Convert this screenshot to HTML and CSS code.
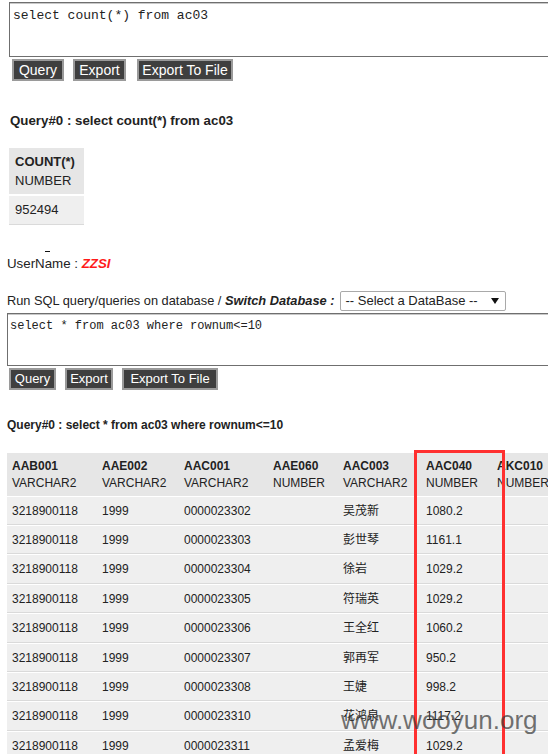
FILE: index.html
```html
<!DOCTYPE html>
<html>
<head>
<meta charset="utf-8">
<link rel="stylesheet" href="styles.css">
</head>
<body>
<section class="top">
  <textarea class="sql sql-top">select count(*) from ac03</textarea>
  <div class="btns btns-top">
    <button class="btn b-q">Query</button>
    <button class="btn b-e">Export</button>
    <button class="btn b-f">Export To File</button>
  </div>
  <h4 class="qtitle qtitle-top">Query#0 : select count(*) from ac03</h4>
  <table class="res res-top">
    <tr><th class="cnt"><b>COUNT(*)</b><br>NUMBER</th></tr>
    <tr><td>952494</td></tr>
  </table>
</section>

<span class="dash"></span>
<p class="user">UserName : <b class="zzsi">ZZSI</b></p>

<div class="runrow">
  <span>Run SQL query/queries on database / <b><i>Switch Database :</i></b></span>
  <div class="select">
    <span>-- Select a DataBase --</span>
    <svg class="arrow" width="8" height="6" viewBox="0 0 8 6"><polygon points="0,0 8,0 4,6" fill="#111"/></svg>
  </div>
</div>
<textarea class="sql sql-bot">select * from ac03 where rownum&lt;=10</textarea>
<div class="btns btns-bot">
  <button class="btn b-q">Query</button>
  <button class="btn b-e">Export</button>
  <button class="btn b-f">Export To File</button>
</div>
<h4 class="qtitle qtitle-bot">Query#0 : select * from ac03 where rownum&lt;=10</h4>

<div class="tablewrap">
  <table class="res res-main">
    <tr>
      <th class="c1"><b>AAB001</b><br>VARCHAR2</th>
      <th class="c2"><b>AAE002</b><br>VARCHAR2</th>
      <th class="c3"><b>AAC001</b><br>VARCHAR2</th>
      <th class="c4"><b>AAE060</b><br>NUMBER</th>
      <th class="c5"><b>AAC003</b><br>VARCHAR2</th>
      <th class="c6"><b>AAC040</b><br>NUMBER</th>
      <th class="c7"><b>AKC010</b><br>NUMBER</th>
      <th class="c8"><b>AKC011</b><br>NUMBER</th>
    </tr>
    <tr><td>3218900118</td><td>1999</td><td>0000023302</td><td></td><td>吴茂新</td><td>1080.2</td><td></td><td></td></tr>
    <tr><td>3218900118</td><td>1999</td><td>0000023303</td><td></td><td>彭世琴</td><td>1161.1</td><td></td><td></td></tr>
    <tr><td>3218900118</td><td>1999</td><td>0000023304</td><td></td><td>徐岩</td><td>1029.2</td><td></td><td></td></tr>
    <tr><td>3218900118</td><td>1999</td><td>0000023305</td><td></td><td>符瑞英</td><td>1029.2</td><td></td><td></td></tr>
    <tr><td>3218900118</td><td>1999</td><td>0000023306</td><td></td><td>王全红</td><td>1060.2</td><td></td><td></td></tr>
    <tr><td>3218900118</td><td>1999</td><td>0000023307</td><td></td><td>郭再军</td><td>950.2</td><td></td><td></td></tr>
    <tr><td>3218900118</td><td>1999</td><td>0000023308</td><td></td><td>王婕</td><td>998.2</td><td></td><td></td></tr>
    <tr><td>3218900118</td><td>1999</td><td>0000023310</td><td></td><td>花鸿泉</td><td>1117.2</td><td></td><td></td></tr>
    <tr><td>3218900118</td><td>1999</td><td>0000023311</td><td></td><td>孟爱梅</td><td>1029.2</td><td></td><td></td></tr>
    <tr><td>3218900118</td><td>1999</td><td>0000023312</td><td></td><td>张军</td><td>1029.2</td><td></td><td></td></tr>
  </table>
  <div class="redbox"></div>
  <div class="watermark">www.wooyun.org</div>
</div>
</body>
</html>
```

FILE: styles.css
```css
html, body {
  margin: 0;
  padding: 0;
  overflow: hidden;
  background: #fff;
}
body {
  font-family: "Liberation Sans", Arial, "Noto Sans CJK SC", sans-serif;
  font-size: 12px;
  color: #222;
}

.sql {
  display: block;
  box-sizing: border-box;
  resize: none;
  width: 620px;
  border: 1px solid #6f6f6f;
  box-shadow: inset 0 1px 0 #c8c8c8;
  font-family: "Liberation Mono", "Courier New", monospace;
  color: #222;
  background: #fff;
  outline: none;
  overflow: hidden;
}
.sql-top {
  margin: 2px 0 0 9px;
  height: 55px;
  padding: 5px 3px;
  font-size: 13px;
  line-height: 15px;
}
.sql-bot {
  margin: 2px 0 0 7px;
  height: 53px;
  padding: 5px 2px 5px;
  font-size: 12px;
  line-height: 14px;
}

.btns {
  display: flex;
}
.btn {
  box-sizing: border-box;
  background: #3f3f3f;
  color: #fff;
  border: 2px solid #9a9a9a;
  font-family: "Liberation Sans", Arial, sans-serif;
  padding: 0;
  margin: 0;
  text-align: center;
}
.btns-top {
  margin: 2px 0 0 12px;
  gap: 9px;
}
.btns-top .btn { height: 22px; font-size: 14px; }
.btns-top .b-q { width: 52px; }
.btns-top .b-e { width: 53px; margin-right: 2px; }
.btns-top .b-f { width: 96px; }

.btns-bot {
  margin: 2px 0 0 9px;
  gap: 9px;
}
.btns-bot .btn { height: 22px; font-size: 13px; }
.btns-bot .b-q { width: 47px; }
.btns-bot .b-e { width: 48px; }
.btns-bot .b-f { width: 96px; }

.qtitle {
  margin: 0;
  font-weight: bold;
}
.qtitle-top {
  margin: 32px 0 0 10px;
  font-size: 13.3px;
  line-height: 16px;
}
.qtitle-bot {
  margin: 28px 0 0 7px;
  font-size: 12px;
  line-height: 15px;
}

.res {
  border-collapse: separate;
  border-spacing: 0 2px;
}
.res th {
  background: #e6e6e6;
  text-align: left;
  font-weight: normal;
  vertical-align: top;
}
.res td {
  background: #efefef;
  border-bottom: 1px solid #dadada;
  white-space: nowrap;
}
.res-top {
  margin: 17px 0 0 9px;
  font-size: 13px;
}
.res-top th {
  width: 75px;
  box-sizing: border-box;
  padding: 5px 0 4px 6px;
  line-height: 18.5px;
}
.res-top td {
  padding: 5px 0 4px 6px;
  line-height: 18.5px;
}

.dash {
  display: block;
  width: 5px;
  height: 1px;
  background: #111;
  margin: 24px 0 0 45px;
}
.user {
  margin: 4px 0 0 7px;
  font-size: 13.3px;
  line-height: 15px;
}
.zzsi {
  color: #ff1a1a;
  font-style: italic;
}

.runrow {
  display: flex;
  align-items: center;
  gap: 6px;
  margin: 20px 0 0 7px;
  font-size: 12.8px;
}
.select {
  box-sizing: border-box;
  width: 166px;
  height: 20px;
  border: 1px solid #a9a9a9;
  border-radius: 2px;
  display: flex;
  align-items: center;
  justify-content: space-between;
  padding: 0 6px 0 4px;
  font-size: 13px;
  background: #fff;
}
.arrow { display: block; }

.tablewrap {
  position: relative;
  margin: 19px 0 0 7px;
}
.res-main {
  font-size: 12px;
  border-spacing: 0 1px;
  table-layout: fixed;
  width: 625px;
}
.res-main th {
  box-sizing: border-box;
  padding: 5px 0 4px 5px;
  line-height: 17px;
  white-space: nowrap;
  overflow: visible;
}
.res-main td {
  padding: 7px 0 5px 5px;
  line-height: 15.4px;
}
.res-main .c1 { width: 90px; }
.res-main .c2 { width: 82px; }
.res-main .c3 { width: 89px; }
.res-main .c4 { width: 70px; }
.res-main .c5 { width: 83px; }
.res-main .c6 { width: 71px; }
.res-main .c7 { width: 70px; }
.res-main .c8 { width: 70px; }

.redbox {
  position: absolute;
  left: 407px;
  top: -2px;
  width: 91px;
  height: 400px;
  box-sizing: border-box;
  border: 3px solid #ff3030;
  border-bottom: none;
}
.watermark {
  position: absolute;
  left: 334px;
  top: 253px;
  font-family: "Liberation Sans", Arial, sans-serif;
  font-size: 26px;
  line-height: 30px;
  color: rgba(60, 60, 60, 0.72);
  white-space: nowrap;
}
```
